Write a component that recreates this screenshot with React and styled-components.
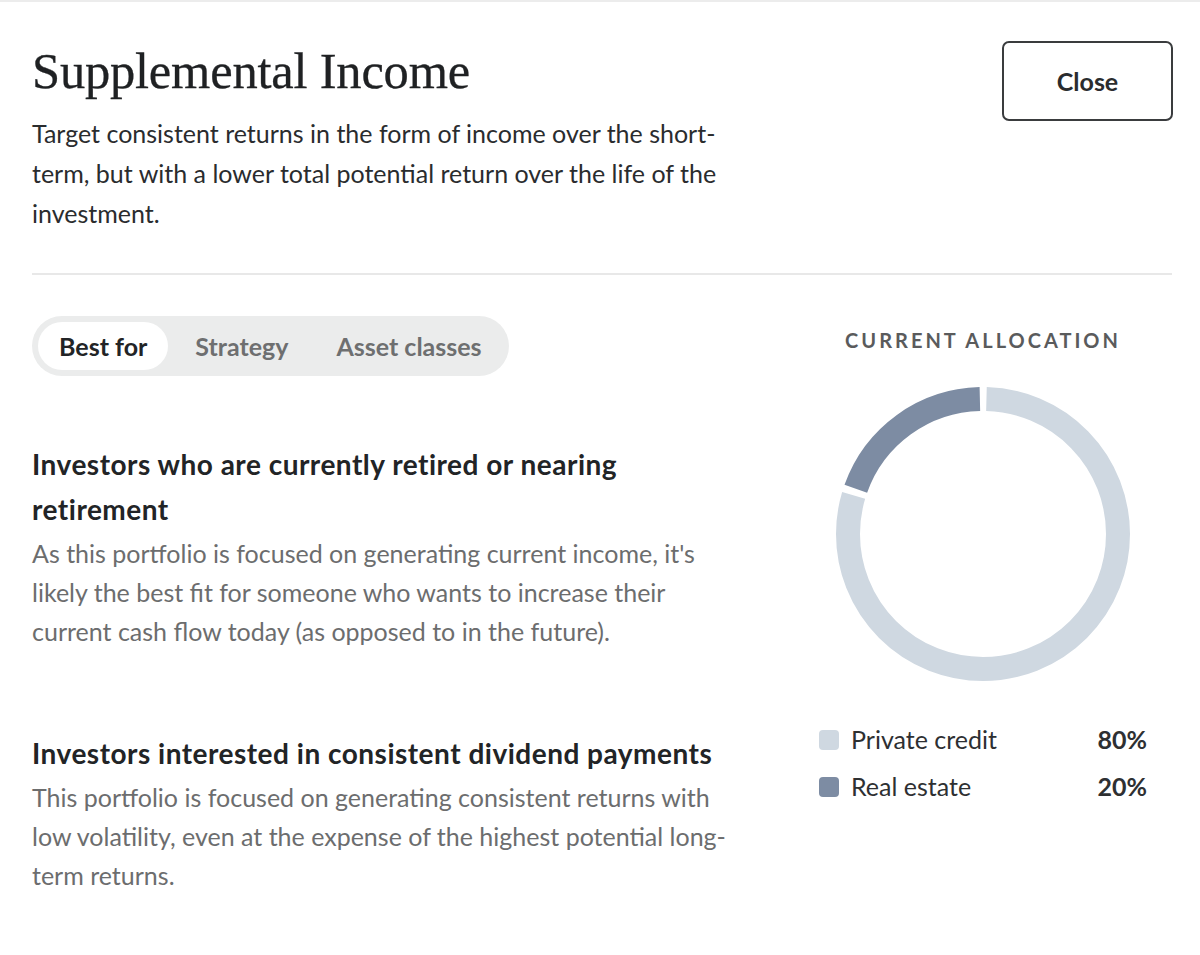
import React, { useState } from "react";
import styled, { createGlobalStyle } from "styled-components";

const GlobalStyle = createGlobalStyle`
  html, body { margin: 0; padding: 0; background: #ffffff; }
  body { font-family: Lato, "Liberation Sans", sans-serif; color: #222426; }
  * { box-sizing: border-box; }
`;

const Page = styled.div`
  width: 1200px;
  min-height: 955px;
  border-top: 2px solid #ececec;
  padding: 38px 27px 40px 32px;
`;

const Header = styled.header`
  display: flex;
  justify-content: space-between;
  align-items: flex-start;
  gap: 40px;
`;

const HeaderText = styled.div`
  max-width: 712px;
`;

const Title = styled.h1`
  margin: 0;
  font-family: "Liberation Serif", "DejaVu Serif", serif;
  font-weight: 400;
  font-size: 50.5px;
  line-height: 62px;
  letter-spacing: -0.2px;
  color: #1f2123;
  -webkit-text-stroke: 0.3px #1f2123;
`;

const Lead = styled.p`
  margin: 11px 0 0;
  font-size: 25px;
  line-height: 40px;
  color: #2a2c2e;
`;

const CloseButton = styled.button`
  flex: none;
  width: 171px;
  height: 80px;
  margin-top: 1px;
  border: 2px solid #3a3c3e;
  border-radius: 7px;
  background: #fff;
  font-family: Lato, "Liberation Sans", sans-serif;
  font-size: 25px;
  font-weight: 700;
  color: #2a2c2e;
  cursor: pointer;
`;

const Divider = styled.hr`
  margin: 40px 0 0;
  border: 0;
  border-top: 2px solid #e8e8e8;
  width: 1140px;
`;

const Body = styled.div`
  display: grid;
  grid-template-columns: 712px 378px;
  column-gap: 50px;
  margin-top: 41px;
`;

const LeftCol = styled.div`
  display: flex;
  flex-direction: column;
`;

const Tabs = styled.div`
  display: inline-flex;
  align-self: flex-start;
  align-items: center;
  gap: 6px;
  padding: 6px;
  height: 60px;
  border-radius: 30px;
  background: #ebecec;
`;

const Tab = styled.button`
  height: 48px;
  padding: 0 21px;
  border: 0;
  border-radius: 24px;
  background: ${(p) => (p.$active ? "#ffffff" : "transparent")};
  font-family: Lato, "Liberation Sans", sans-serif;
  font-size: 25px;
  font-weight: 700;
  color: ${(p) => (p.$active ? "#222426" : "#6e6f70")};
  cursor: pointer;
`;

const Sections = styled.div`
  display: flex;
  flex-direction: column;
  gap: 80px;
  margin-top: 66px;
`;

const Section = styled.section``;

const SectionTitle = styled.h3`
  margin: 0;
  font-size: 28px;
  font-weight: 700;
  line-height: 45px;
  letter-spacing: 0.5px;
  color: #222426;
`;

const SectionText = styled.p`
  margin: 2px 0 0;
  font-size: 25px;
  line-height: 39px;
  color: #6c6d6e;
`;

const RightCol = styled.aside`
  display: flex;
  flex-direction: column;
  align-items: center;
  padding-top: 12px;
`;

const Eyebrow = styled.div`
  font-size: 20px;
  font-weight: 700;
  letter-spacing: 3px;
  color: #5a5b5c;
  line-height: 24px;
`;

const ChartWrap = styled.div`
  margin-top: 35px;
  width: 294px;
  height: 294px;
`;

const Legend = styled.ul`
  list-style: none;
  margin: 42px 0 0;
  padding: 0;
  width: 328px;
  display: flex;
  flex-direction: column;
  gap: 14px;
`;

const LegendRow = styled.li`
  display: flex;
  align-items: center;
  font-size: 25px;
  line-height: 33px;
  color: #2e3032;
`;

const Swatch = styled.span`
  width: 20px;
  height: 20px;
  border-radius: 4px;
  background: ${(p) => p.$color};
  margin-right: 12px;
  flex: none;
`;

const LegendLabel = styled.span`
  flex: 1;
`;

const LegendValue = styled.span`
  font-weight: 700;
  color: #2e3032;
`;

const LIGHT = "#cfd8e1";
const DARK = "#7d8ca3";

const allocation = [
  { label: "Private credit", value: 80, color: LIGHT },
  { label: "Real estate", value: 20, color: DARK },
];

function Donut() {
  const size = 294;
  const stroke = 24;
  const r = (size - stroke) / 2;
  const c = 2 * Math.PI * r;
  const gap = 7;
  let acc = 0;
  return (
    <svg width={size} height={size} viewBox={`0 0 ${size} ${size}`}>
      <g transform={`rotate(-90 ${size / 2} ${size / 2})`}>
        {allocation.map((s) => {
          const len = (s.value / 100) * c - gap;
          const offset = -(acc + gap / 2);
          acc += (s.value / 100) * c;
          return (
            <circle
              key={s.label}
              cx={size / 2}
              cy={size / 2}
              r={r}
              fill="none"
              stroke={s.color}
              strokeWidth={stroke}
              strokeDasharray={`${len} ${c}`}
              strokeDashoffset={offset}
            />
          );
        })}
      </g>
    </svg>
  );
}

export default function App() {
  const [tab, setTab] = useState("Best for");
  return (
    <>
      <GlobalStyle />
      <Page>
        <Header>
          <HeaderText>
            <Title>Supplemental Income</Title>
            <Lead>
              Target consistent returns in the form of income over the short-term, but with a lower
              total potential return over the life of the investment.
            </Lead>
          </HeaderText>
          <CloseButton>Close</CloseButton>
        </Header>
        <Divider />
        <Body>
          <LeftCol>
            <Tabs>
              {["Best for", "Strategy", "Asset classes"].map((t) => (
                <Tab key={t} $active={tab === t} onClick={() => setTab(t)}>
                  {t}
                </Tab>
              ))}
            </Tabs>
            <Sections>
              <Section>
                <SectionTitle>Investors who are currently retired or nearing retirement</SectionTitle>
                <SectionText>
                  As this portfolio is focused on generating current income, it's likely the best fit
                  for someone who wants to increase their current cash flow today (as opposed to in
                  the future).
                </SectionText>
              </Section>
              <Section>
                <SectionTitle>Investors interested in consistent dividend payments</SectionTitle>
                <SectionText>
                  This portfolio is focused on generating consistent returns with low volatility, even
                  at the expense of the highest potential long-term returns.
                </SectionText>
              </Section>
            </Sections>
          </LeftCol>
          <RightCol>
            <Eyebrow>CURRENT ALLOCATION</Eyebrow>
            <ChartWrap>
              <Donut />
            </ChartWrap>
            <Legend>
              {allocation.map((s) => (
                <LegendRow key={s.label}>
                  <Swatch $color={s.color} />
                  <LegendLabel>{s.label}</LegendLabel>
                  <LegendValue>{s.value}%</LegendValue>
                </LegendRow>
              ))}
            </Legend>
          </RightCol>
        </Body>
      </Page>
    </>
  );
}
